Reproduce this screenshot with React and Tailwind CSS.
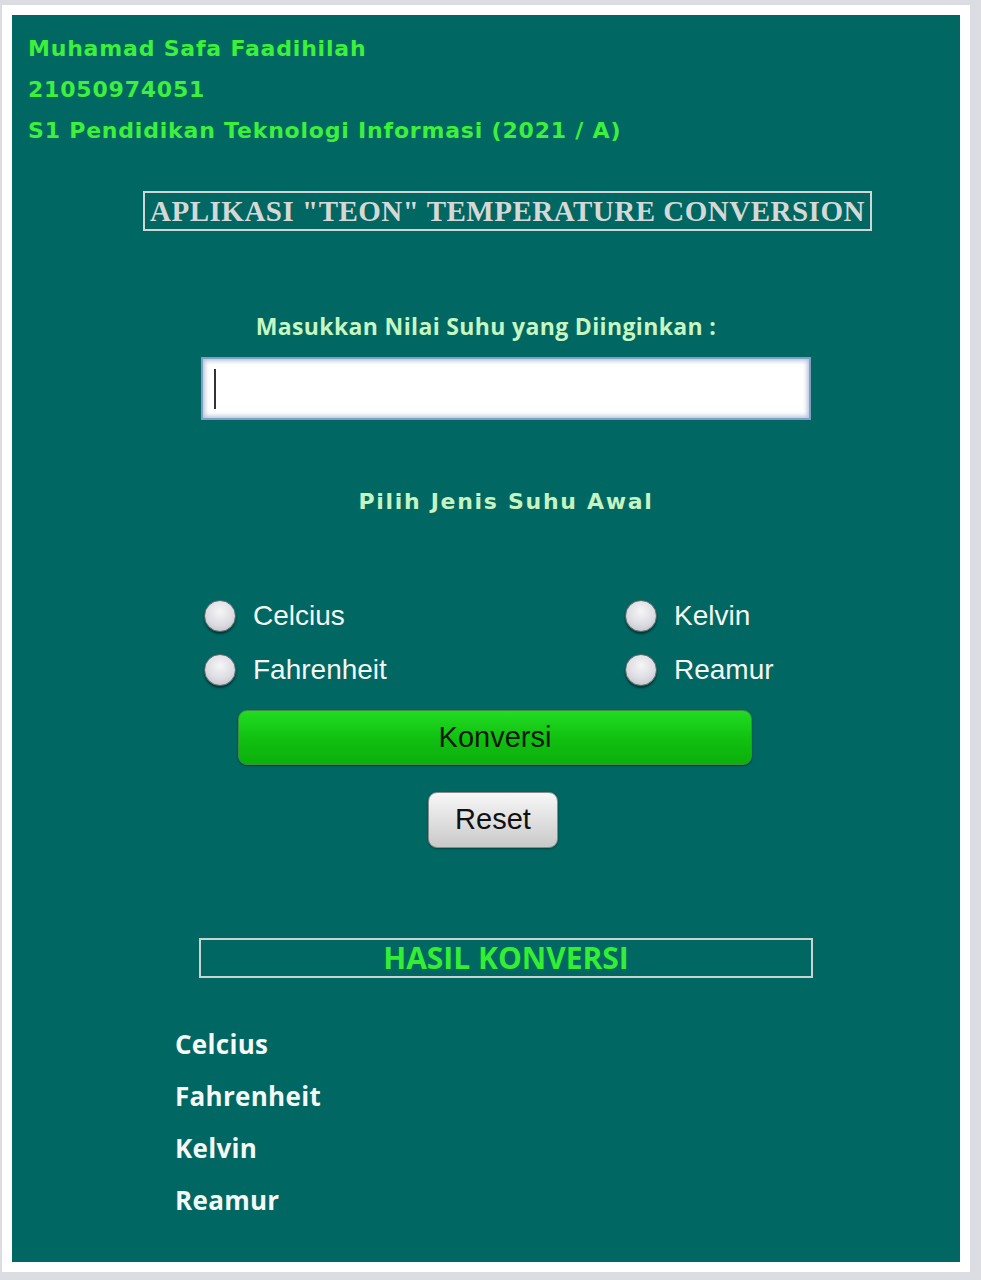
import React from "react";

function Radio({ label }) {
  return (
    <div className="flex items-center h-[40px]">
      <div className="w-[32px] h-[32px] rounded-full border border-[#5d6b6b] bg-[radial-gradient(circle_at_50%_35%,#f6f6f8_0%,#dcdce2_55%,#b9b9c2_100%)] shadow-[0_2px_2px_rgba(0,0,0,0.45)]" />
      <span className="ml-[17px] text-[28px] leading-none text-[#f4f6f4] font-['Liberation_Sans',Arial,sans-serif]">
        {label}
      </span>
    </div>
  );
}

export default function App() {
  return (
    <div className="w-[981px] h-[1280px] bg-[#dcdde2] pt-[5px] pl-[2px]">
      <div className="w-[968px] h-[1267px] bg-white p-[10px]">
        <div className="w-[948px] h-[1247px] bg-[#006762] pt-[13px] flex flex-col">
          <div className="pl-[16px] font-['DejaVu_Sans',Verdana,sans-serif] font-bold text-[22px] tracking-[0.8px] leading-[41px] text-[#3cf03c]">
            <div>Muhamad Safa Faadihilah</div>
            <div>21050974051</div>
            <div>S1 Pendidikan Teknologi Informasi (2021 / A)</div>
          </div>

          <div className="mt-[40px] ml-[131px] w-[729px] h-[40px] border-2 border-[#cfd6d4] flex items-center justify-center">
            <span className="font-['Liberation_Serif',serif] font-bold text-[29px] tracking-[0.5px] leading-none text-[#d6d8d6] whitespace-nowrap">
              APLIKASI "TEON" TEMPERATURE CONVERSION
            </span>
          </div>

          <div className="mt-[80px] h-[30px] leading-[30px] text-center font-['Open_Sans',sans-serif] font-bold text-[23px] tracking-[0.35px] text-[#c6f6c2]">
            Masukkan Nilai Suhu yang Diinginkan :
          </div>

          <div className="mt-[16px] ml-[189px] w-[610px] h-[63px] bg-white border-2 border-[#7f9fc4] shadow-[inset_0_0_4px_2px_rgba(120,150,190,0.55)] flex items-center pl-[11px]">
            <div className="w-[2px] h-[40px] bg-[#333]" />
          </div>

          <div className="mt-[67px] ml-[189px] w-[610px] h-[30px] leading-[30px] text-center font-['DejaVu_Sans',Verdana,sans-serif] font-bold text-[22px] tracking-[1.7px] text-[#c6f4c0]">
            Pilih Jenis Suhu Awal
          </div>

          <div className="mt-[79px] ml-[192px] grid grid-cols-[421px_auto] gap-y-[14px]">
            <Radio label="Celcius" />
            <Radio label="Kelvin" />
            <Radio label="Fahrenheit" />
            <Radio label="Reamur" />
          </div>

          <button className="mt-[20px] ml-[226px] w-[514px] h-[55px] rounded-[9px] border border-[#3d8f3d] bg-[linear-gradient(to_bottom,#22dc22,#10bf10_55%,#0cb00c)] shadow-[0_1px_2px_rgba(0,0,0,0.35)] text-[29px] text-[#0a1a0a] font-['Liberation_Sans',Arial,sans-serif] flex items-center justify-center">
            Konversi
          </button>

          <button className="mt-[27px] ml-[416px] w-[130px] h-[56px] rounded-[9px] border border-[#8a8a8a] bg-[linear-gradient(to_bottom,#f7f7f7,#dedede_55%,#c9c9c9)] shadow-[0_1px_2px_rgba(0,0,0,0.35)] text-[29px] text-[#111] font-['Liberation_Sans',Arial,sans-serif] flex items-center justify-center">
            Reset
          </button>

          <div className="mt-[90px] ml-[187px] w-[614px] h-[40px] border-2 border-[#c9d3d1] flex items-center justify-center">
            <span className="font-['Open_Sans',sans-serif] font-bold text-[30px] leading-none text-[#33ee33]">
              HASIL KONVERSI
            </span>
          </div>

          <div className="mt-[40px] ml-[163px] font-['Open_Sans',sans-serif] font-bold text-[26px] tracking-[0.3px] leading-[52px] text-[#f6f8f6]">
            <div>Celcius</div>
            <div>Fahrenheit</div>
            <div>Kelvin</div>
            <div>Reamur</div>
          </div>
        </div>
      </div>
    </div>
  );
}
